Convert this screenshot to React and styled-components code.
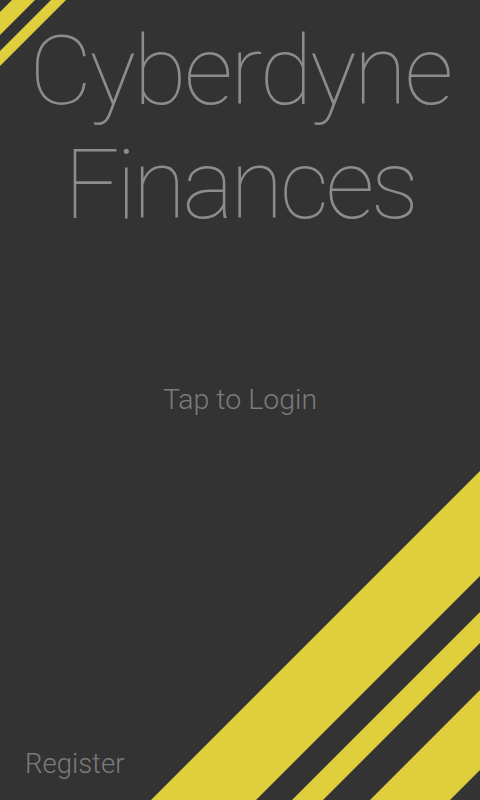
import React from "react";
import styled, { createGlobalStyle } from "styled-components";

const GlobalStyle = createGlobalStyle`
  html, body {
    margin: 0;
    padding: 0;
    background: #333333;
  }
  * {
    box-sizing: border-box;
  }
`;

const Screen = styled.div`
  position: relative;
  width: 480px;
  height: 800px;
  overflow: hidden;
  background: #333333;
  font-family: Roboto, "Liberation Sans", sans-serif;
  font-weight: 100;
  display: flex;
  flex-direction: column;
`;

const Backdrop = styled.svg`
  position: absolute;
  inset: 0;
  width: 100%;
  height: 100%;
  pointer-events: none;
`;

const Content = styled.div`
  position: relative;
  flex: 1;
  display: flex;
  flex-direction: column;
  align-items: center;
`;

const Title = styled.h1`
  margin: 14px 0 0;
  font-size: 97px;
  line-height: 114px;
  font-weight: 100;
  color: #8c8c8c;
  text-align: center;
  letter-spacing: -2.5px;
  word-spacing: 0;
`;

const TitleLine = styled.span`
  display: block;
  letter-spacing: ${(p) => p.$tight ? "-3.5px" : "inherit"};
`;

const LoginButton = styled.button`
  margin-top: 140px;
  border: 0;
  background: none;
  padding: 0;
  font-family: inherit;
  font-weight: 300;
  font-size: 28.5px;
  line-height: 36px;
  color: #7b7b7b;
  cursor: pointer;
`;

const Footer = styled.div`
  margin-top: auto;
  align-self: stretch;
  padding: 0 0 18px 25px;
`;

const RegisterLink = styled.a`
  font-size: 27.5px;
  line-height: 36px;
  font-weight: 300;
  color: #7b7b7b;
  text-decoration: none;
  cursor: pointer;
`;

// stripes along x + y = const, given as [from, to]
const stripes = [
  [12, 35],
  [51, 66],
  [951, 1056],
  [1092, 1123],
  [1170, 1250],
];

const stripePoints = ([a, b]) =>
  `${a - 1000},1000 ${a + 1000},-1000 ${b + 1000},-1000 ${b - 1000},1000`;

export default function App() {
  return (
    <>
      <GlobalStyle />
      <Screen>
        <Backdrop viewBox="0 0 480 800" preserveAspectRatio="none">
          {stripes.map((s) => (
            <polygon key={s[0]} points={stripePoints(s)} fill="#e0cf3c" />
          ))}
        </Backdrop>
        <Content>
          <Title>
            <TitleLine>Cyberdyne</TitleLine>
            <TitleLine $tight>Finances</TitleLine>
          </Title>
          <LoginButton>Tap to Login</LoginButton>
          <Footer>
            <RegisterLink>Register</RegisterLink>
          </Footer>
        </Content>
      </Screen>
    </>
  );
}
